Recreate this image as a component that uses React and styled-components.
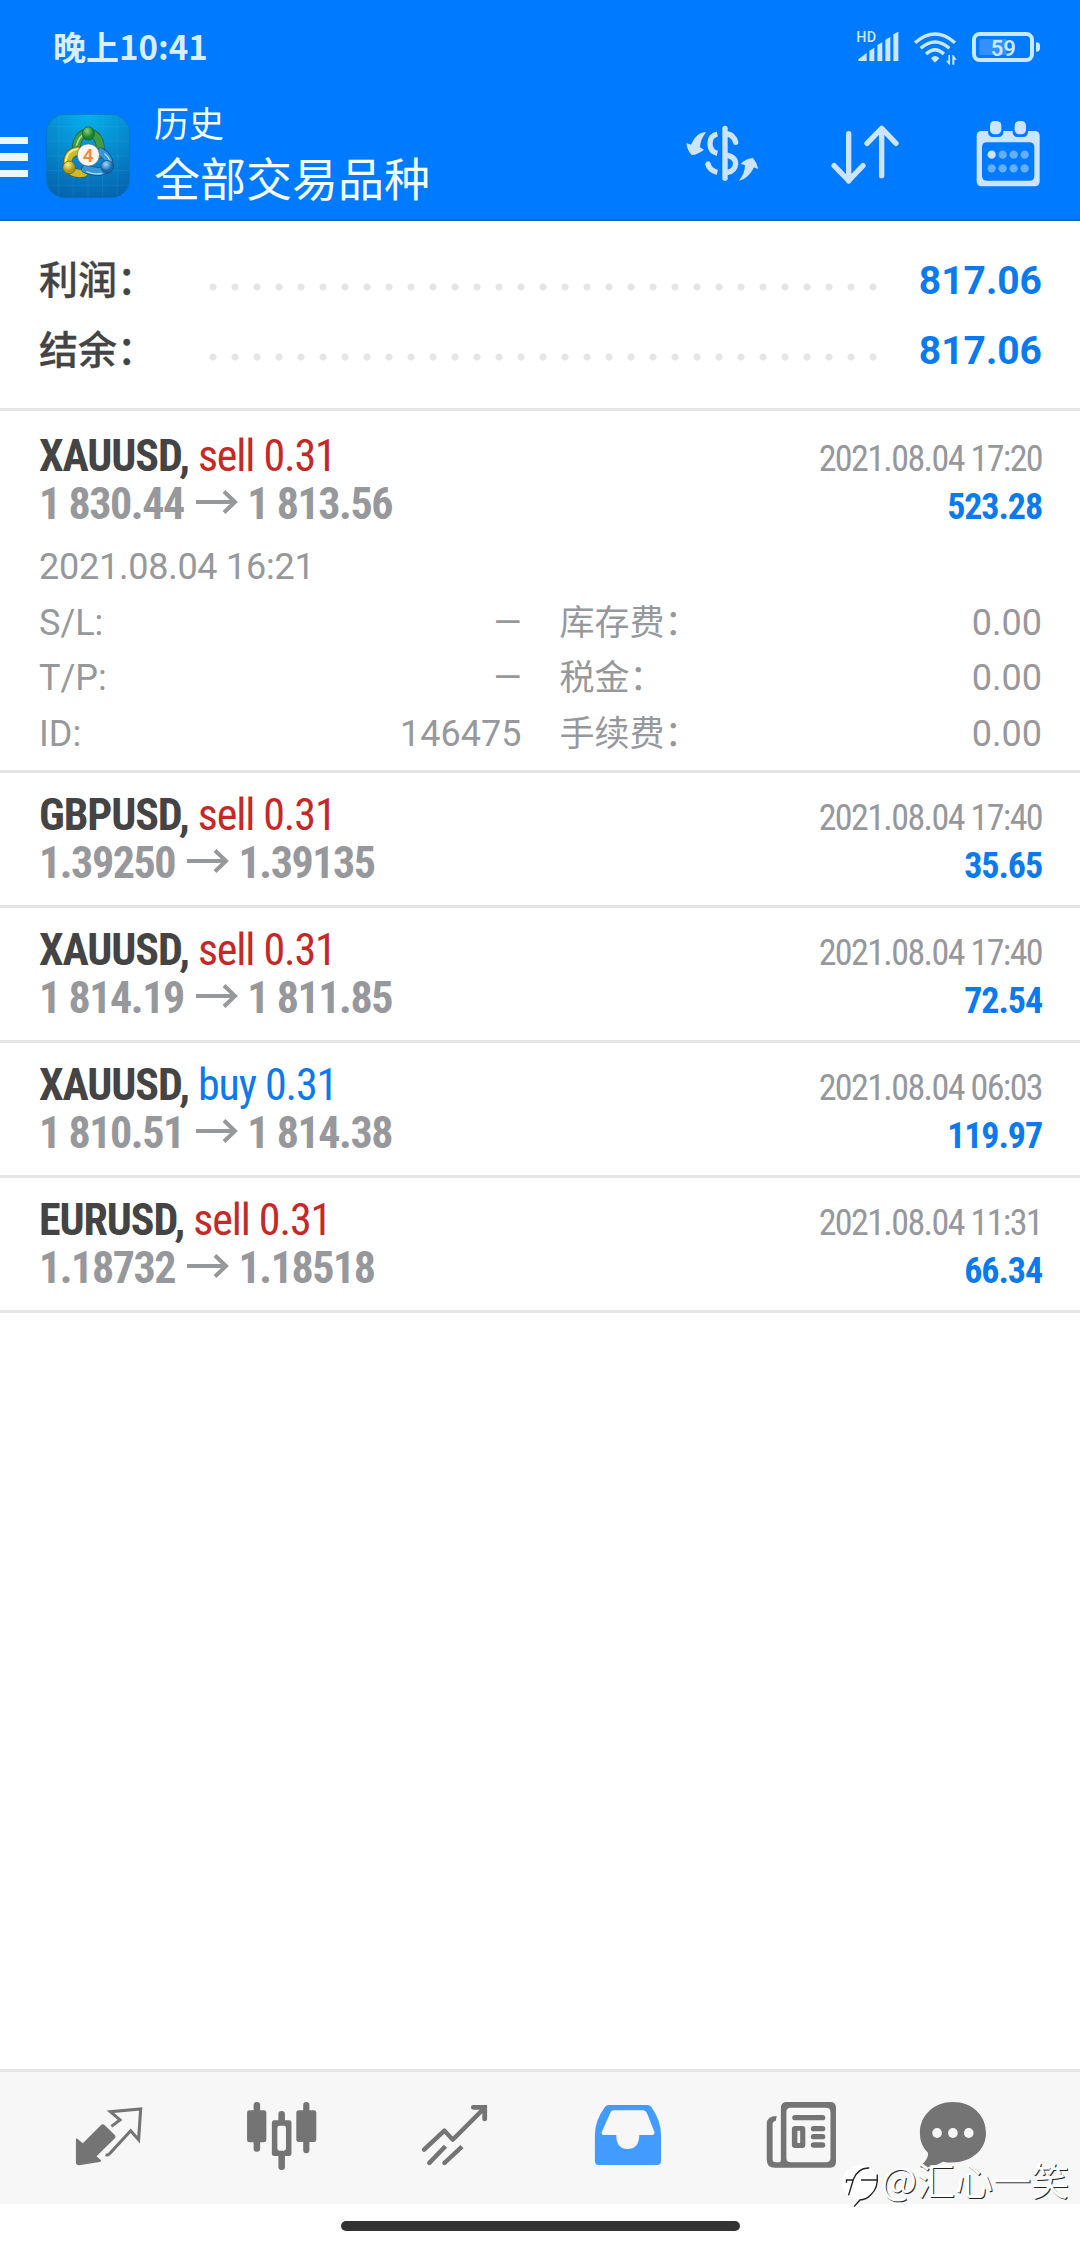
import React from 'react'
import styled, { createGlobalStyle } from 'styled-components'

const summary = [
    { label: '利润：', value: '817.06' },
    { label: '结余：', value: '817.06' },
]

const deals = [
    {
        id: 1, symbol: 'XAUUSD', side: 'sell', volume: '0.31', open: '1 830.44', close: '1 813.56',
        time: '2021.08.04 17:20', profit: '523.28', openTime: '2021.08.04 16:21',
        details: [
            ['S/L:', '—', '库存费：', '0.00'],
            ['T/P:', '—', '税金：', '0.00'],
            ['ID:', '146475', '手续费：', '0.00'],
        ],
    },
    { id: 2, symbol: 'GBPUSD', side: 'sell', volume: '0.31', open: '1.39250', close: '1.39135', time: '2021.08.04 17:40', profit: '35.65' },
    { id: 3, symbol: 'XAUUSD', side: 'sell', volume: '0.31', open: '1 814.19', close: '1 811.85', time: '2021.08.04 17:40', profit: '72.54' },
    { id: 4, symbol: 'XAUUSD', side: 'buy', volume: '0.31', open: '1 810.51', close: '1 814.38', time: '2021.08.04 06:03', profit: '119.97' },
    { id: 5, symbol: 'EURUSD', side: 'sell', volume: '0.31', open: '1.18732', close: '1.18518', time: '2021.08.04 11:31', profit: '66.34' },
]

function StatusIcons() {
    return (
        <StatusRight>
            <StatusSvg $w={43} viewBox="650 78 129 120">
                <text x="651" y="125" fontSize="43" fontWeight="500" letterSpacing="1">HD</text>
                <path d="M657 183V178L682 159V183ZM690 183V152L705 143V183ZM714 183V135L729 127V183ZM738 183V119L753 111V183ZM762 183V103L777 95V183Z" />
            </StatusSvg>
            <StatusSvg $w={45} viewBox="822 78 135 120">
                <g fill="none" stroke="#c9e8ff" strokeWidth="10">
                    <path d="M828 128Q888 76 948 128" />
                    <path d="M845 145Q888 107 931 145" />
                    <path d="M861 162Q888 137 915 162" />
                </g>
                <path d="M876 175Q888 161 901 175L891 185Q888 188 885 185Z" />
                <path d="M928 165h5v29h-3l-9-12h7zM940 194v-29h3l10 14h-7v15z" />
            </StatusSvg>
            <StatusSvg $w={70} viewBox="996 78 210 120">
                <path d="M1021 124q0-7 7-7h75v48h-75q-7 0-7-7z" fill="#3391ff" />
                <rect x="1005" y="102" width="174" height="78" rx="17" fill="none" stroke="#c9e8ff" strokeWidth="12" />
                <path d="M1191 127q12 0 12 9v10q0 9-12 9z" />
                <text x="1055" y="167" fontSize="66" fontWeight="600">59</text>
            </StatusSvg>
        </StatusRight>
    )
}

function Logo() {
    return (
        <LogoSvg viewBox="0 0 250 250">
            <defs>
                <radialGradient id="sky" cx=".5" cy="0" r="1.05">
                    <stop offset="0" stopColor="#06b0ec" />
                    <stop offset=".55" stopColor="#0786cb" />
                    <stop offset="1" stopColor="#0462ae" />
                </radialGradient>
                <radialGradient id="green" cx=".4" cy=".3"><stop offset="0" stopColor="#8fd36d" /><stop offset="1" stopColor="#17832e" /></radialGradient>
                <radialGradient id="yellow" cx=".4" cy=".3"><stop offset="0" stopColor="#fff08a" /><stop offset="1" stopColor="#a89718" /></radialGradient>
                <radialGradient id="blue" cx=".4" cy=".3"><stop offset="0" stopColor="#9fdcff" /><stop offset="1" stopColor="#1668b0" /></radialGradient>
            </defs>
            <rect x="1" y="1" width="248" height="248" rx="54" fill="url(#sky)" stroke="#0a6fc4" strokeWidth="2" />
            <path d="M38 3V247M81 2V248M125 2V248M168 2V248M212 3V247M2 38H248M1 81H249M1 125H249M1 168H249M2 212H248" stroke="#4cc4ee" strokeOpacity=".2" strokeWidth="2" />
            <g fill="none" strokeLinecap="round">
                <path d="M91 116C86 74 106 57 126 57S168 76 160 120" stroke="#165c33" strokeWidth="26" />
                <path d="M91 116C86 74 106 57 126 57S168 76 160 120" stroke="#3f9c45" strokeWidth="22" />
                <path d="M91 92Q98 66 116 60" stroke="#a9dc8c" strokeWidth="5" />
                <path d="M95 110Q64 114 64 148Q70 182 112 176" stroke="#5c5b14" strokeWidth="26" />
                <path d="M95 110Q64 114 64 148Q70 182 112 176" stroke="#cdbb2c" strokeWidth="22" />
                <path d="M93 104Q62 110 59 141" stroke="#fbf09a" strokeWidth="5" />
                <path d="M163 113Q188 126 188 154Q170 182 118 164" stroke="#0d477b" strokeWidth="26" />
                <path d="M163 113Q188 126 188 154Q170 182 118 164" stroke="#3595d6" strokeWidth="22" />
                <path d="M175 119Q190 131 192 148M122 172Q143 181 165 177" stroke="#a6dcfa" strokeWidth="4" />
            </g>
            <ellipse cx="126" cy="58" rx="18" ry="20" fill="url(#green)" stroke="#14562c" strokeWidth="2" />
            <circle cx="69" cy="159" r="19" fill="url(#yellow)" stroke="#5c5b14" strokeWidth="2" />
            <circle cx="182" cy="157" r="19" fill="url(#blue)" stroke="#0d477b" strokeWidth="2" />
            <circle cx="126" cy="122" r="33" fill="#f7f7f5" stroke="#56656a" strokeWidth="2" />
            <text x="125" y="142" fontSize="56" fontWeight="600" fill="#f08a3c" textAnchor="middle">4</text>
        </LogoSvg>
    )
}

function HeaderActions() {
    return (
        <Actions>
            <ActionSvg viewBox="137 348 216 222">
                <path d="M196 396Q166 398 152 434L138 429Q141 452 154 465Q172 464 191 449L179 442Q180 418 196 398ZM297 542Q325 536 341 502L354 508Q350 488 338 474Q319 475 301 491L314 496Q314 520 297 540Z" />
                <g fill="none" strokeWidth="16" strokeLinecap="round">
                    <path d="M254 385V535" />
                    <path d="M262 402Q280 405 286 427M262 466Q286 472 286 491Q284 513 262 517" />
                    <path d="M231 402Q209 407 209 431T231 460M203 491Q206 511 231 517" strokeLinecap="butt" />
                    <path d="M203 492L204 496" />
                </g>
            </ActionSvg>
            <ActionSvg viewBox="567 348 216 222">
                <g fill="none" strokeWidth="16" strokeLinecap="round" strokeLinejoin="round">
                    <path d="M626 401V543M582 497L626 542L669 497" />
                    <path d="M725 527V385M681 430L725 385L768 430" />
                </g>
            </ActionSvg>
            <ActionSvg viewBox="997 348 216 222">
                <path fillRule="evenodd" d="M1026 393H1045Q1044 410 1060 411H1076Q1092 410 1091 393H1119Q1118 410 1134 411H1150Q1166 410 1165 393H1185Q1200 393 1200 408V544Q1200 559 1185 559H1026Q1011 559 1011 544V408Q1011 393 1026 393ZM1042 427Q1027 427 1027 442V527Q1027 542 1042 542H1169Q1184 542 1184 527V442Q1184 427 1169 427Z" />
                <rect x="1051" y="363" width="34" height="40" rx="14" />
                <rect x="1125" y="363" width="34" height="40" rx="14" />
                <circle cx="1056" cy="464" r="12.500" />
                <g fill="#66afff">
                    <circle cx="1089" cy="464" r="12.500" /><circle cx="1122" cy="464" r="12.500" /><circle cx="1155" cy="464" r="12.500" />
                    <circle cx="1056" cy="505" r="12.500" /><circle cx="1089" cy="505" r="12.500" /><circle cx="1122" cy="505" r="12.500" /><circle cx="1155" cy="505" r="12.500" />
                </g>
            </ActionSvg>
        </Actions>
    )
}

function Arrow() {
    return (
        <ArrowSvg viewBox="0 0 42 24">
            <path d="M0 12H39M28 1.500L39 12L28 22.500" fill="none" stroke="#97989c" strokeWidth="4" />
        </ArrowSvg>
    )
}

function Deal({ deal }) {
    return (
        <DealRow $first={!!deal.details}>
            <Line>
                <Instrument>{deal.symbol}, <Side $side={deal.side}>{deal.side} {deal.volume}</Side></Instrument>
                <Time>{deal.time}</Time>
            </Line>
            <Line>
                <Prices>{deal.open}<Arrow />{deal.close}</Prices>
                <Profit>{deal.profit}</Profit>
            </Line>
            {deal.details ? (
                <Details>
                    <OpenTime>{deal.openTime}</OpenTime>
                    {deal.details.map(([a, b, c, d]) => (
                        <DetailPair key={a}>
                            <Detail><span>{a}</span><span>{b}</span></Detail>
                            <Detail><FeeLabel>{c}</FeeLabel><span>{d}</span></Detail>
                        </DetailPair>
                    ))}
                </Details>
            ) : null}
        </DealRow>
    )
}

function TabBar() {
    return (
        <Tabs>
            <Tab>
                <TabSvg viewBox="204.7 120 220.7 216" preserveAspectRatio="none">
                    <path d="M219 236Q220 234 224 237L239 250L292 195Q297 190 302 195L332 225Q336 230 332 235L279 289L292 301Q293 305 288 306L228 316Q219 316 219 307Z" />
                    <path d="M322 199L347 180L319 155L407 147L401 239L378 212L316 282Q312 286 305 285" fill="none" stroke="#747474" strokeWidth="9" />
                </TabSvg>
            </Tab>
            <Tab>
                <TabSvg viewBox="707.1 120 220.7 216" preserveAspectRatio="none">
                    <rect x="716" y="151" width="56" height="96" rx="7" />
                    <rect x="735" y="126" width="19" height="149" rx="9" />
                    <rect x="859" y="151" width="58" height="95" rx="7" />
                    <rect x="879" y="126" width="18" height="154" rx="9" />
                    <rect x="807" y="153" width="19" height="40" rx="9" />
                    <rect x="807" y="280" width="19" height="50" rx="9" />
                    <path fillRule="evenodd" d="M795 181H838Q845 181 845 188V281Q845 288 838 288H795Q788 288 788 281V188Q788 181 795 181ZM810 197Q804 197 804 204V265Q804 272 810 272H823Q829 272 829 265V204Q829 197 823 197Z" />
                </TabSvg>
            </Tab>
            <Tab>
                <TabSvg viewBox="1209.4 120 220.7 216" preserveAspectRatio="none">
                    <g fill="none" stroke="#747474" strokeWidth="13">
                        <path d="M1230 269L1289 212L1313 239L1406 143" strokeLinejoin="round" strokeLinecap="round" />
                        <path d="M1373 142H1406V177" strokeWidth="14" strokeLinecap="round" />
                        <path d="M1245 309L1292 259M1289 309L1340 260" />
                        <path d="M1245 309L1246 308M1289 309L1290 308" strokeLinecap="round" />
                    </g>
                </TabSvg>
            </Tab>
            <Tab>
                <TabSvg viewBox="143.8 120 220.7 216" preserveAspectRatio="none" $active>
                    <path fillRule="evenodd" d="M199 135H309Q318 135 322 141Q350 182 350 225V304Q350 315 338 315H169Q158 315 158 304V225Q158 182 187 141Q191 135 199 135ZM212 151Q206 151 203 158L178 216Q176 225 184 225H220Q220 267 253 267T287 225H323Q332 225 331 216L309 159Q305 151 298 151Z" />
                </TabSvg>
            </Tab>
            <Tab>
                <TabSvg viewBox="646.1 120 220.7 216" preserveAspectRatio="none">
                    <path fillRule="evenodd" d="M715 126H841Q858 126 858 143V306Q858 323 841 323H680Q657 323 657 299V192Q657 168 686 168L683 183Q674 184 674 193V297Q674 307 683 307H691Q698 307 698 299V143Q698 126 715 126ZM727 143Q714 143 714 156V294Q714 307 727 307H829Q842 307 842 294V156Q842 143 829 143Z" />
                    <rect x="731" y="165" width="96" height="16" rx="8" />
                    <path fillRule="evenodd" d="M740 198H760Q769 198 769 207V255Q769 264 760 264H740Q730 264 730 255V207Q730 198 740 198ZM746 212V249H754V212Z" />
                    <rect x="785" y="198" width="42" height="16" rx="8" />
                    <rect x="785" y="222" width="42" height="16" rx="8" />
                    <rect x="785" y="247" width="42" height="16" rx="8" />
                </TabSvg>
            </Tab>
            <Tab $last>
                <TabSvg viewBox="1088.9 120 220.7 216" preserveAspectRatio="none">
                    <path d="M1199 126C1254 126 1295 165 1295 219C1295 279 1237 318 1170 305Q1143 322 1107 323Q1102 321 1107 316Q1128 297 1127 279Q1103 256 1103 219C1103 165 1145 126 1199 126Z" />
                    <g fill="#f7f7f7">
                        <ellipse cx="1153" cy="219" rx="14" ry="15" />
                        <ellipse cx="1199" cy="219" rx="14" ry="15" />
                        <ellipse cx="1245" cy="219" rx="14" ry="15" />
                    </g>
                </TabSvg>
            </Tab>
        </Tabs>
    )
}

function App() {
    return (
        <Screen>
            <GlobalStyle />
            <Header>
                <StatusBar>
                    <Clock>晚上10:41</Clock>
                    <StatusIcons />
                </StatusBar>
                <Toolbar>
                    <Menu><MenuBar /><MenuBar /><MenuBar /></Menu>
                    <Logo />
                    <Titles>
                        <Subtitle>历史</Subtitle>
                        <Title>全部交易品种</Title>
                    </Titles>
                    <HeaderActions />
                </Toolbar>
            </Header>
            <Summary>
                {summary.map(row => (
                    <SummaryRow key={row.label}>
                        <SummaryLabel>{row.label}</SummaryLabel>
                        <Dots />
                        <SummaryValue>{row.value}</SummaryValue>
                    </SummaryRow>
                ))}
            </Summary>
            <List>
                {deals.map(deal => <Deal key={deal.id} deal={deal} />)}
            </List>
            <TabBar />
            <GestureArea><GestureBar /></GestureArea>
            <Watermark>
                <WatermarkSvg viewBox="878 326 110 132" preserveAspectRatio="none">
                    <ellipse cx="930" cy="381" rx="52" ry="51" fill="#fff" />
                    <path d="M957 338Q925 336 911 372L897 420M891 382V374H911M933 374H980M980 358Q984 398 961 419Q948 433 930 434L913 454" fill="none" stroke="#222" strokeWidth="4" />
                </WatermarkSvg>
                @汇心一笑
            </Watermark>
        </Screen>
    )
}
export default App

const GlobalStyle = createGlobalStyle`
    body {
        margin: 0;
        background: #fff;
        font-family: Roboto, 'Noto Sans CJK SC', sans-serif;
    }
    svg { display: block; flex: none; }
`
const Screen = styled.div`
    position: relative;
    display: flex;
    flex-direction: column;
    width: 1080px;
    height: 2248px;
    overflow: hidden;
    background: #fff;
`
const Header = styled.header`
    box-sizing: border-box;
    height: 221px;
    background: #007aff;
    border-bottom: 2px solid #1766b8;
`
const StatusBar = styled.div`
    display: flex;
    justify-content: space-between;
    height: 96px;
    padding: 0 38px 0 53px;
`
const Clock = styled.div`
    font: 700 33px/93px 'Noto Sans CJK SC', sans-serif;
    color: #d8eeff;
`
const StatusRight = styled.div`
    display: flex;
    gap: 13.500px;
    padding-top: 26px;
    margin-right: 1px;
`
const StatusSvg = styled.svg`
    width: ${p => p.$w}px;
    height: 40px;
    fill: #c9e8ff;
`
const Toolbar = styled.div`
    display: flex;
    height: 123px;
`
const Menu = styled.div`
    display: flex;
    flex-direction: column;
    gap: 9px;
    width: 46px;
    padding-top: 40.500px;
`
const MenuBar = styled.div`
    width: 28px;
    height: 7.500px;
    background: #e8f8ff;
`
const LogoSvg = styled.svg`
    width: 84px;
    height: 84px;
    margin-top: 18px;
`
const Titles = styled.div`
    flex: 1;
    padding-left: 24px;
    color: #f2fcff;
    white-space: nowrap;
`
const Subtitle = styled.div`
    font-size: 35px;
    line-height: 50px;
    padding-top: 5px;
`
const Title = styled.div`
    font-size: 46px;
    line-height: 58px;
`
const Actions = styled.div`
    display: flex;
    width: 430px;
    justify-content: space-around;
    padding-top: 20px;
`
const ActionSvg = styled.svg`
    width: 72px;
    height: 74px;
    overflow: visible;
    fill: #cce4ff;
    & g[fill='none'] { stroke: #cce4ff; }
`
const Summary = styled.section`
    padding: 25px 38px 22px 39px;
    border-bottom: 3px solid #e5e5e5;
`
const SummaryRow = styled.div`
    display: flex;
    height: 70px;
    font-size: 39px;
    line-height: 70px;
`
const SummaryLabel = styled.div`
    width: 163px;
    font-weight: 500;
    color: #444;
    -webkit-text-stroke: .3px #444;
`
const Dots = styled.div`
    width: 682px;
    height: 22px;
    margin-top: 30px;
    background: radial-gradient(circle, #e5e5e5 3.200px, transparent 3.900px) 0 0 / 22px 22px;
`
const SummaryValue = styled.div`
    margin-left: auto;
    font-weight: 700;
    color: #0a7aee;
`
const List = styled.main`
    flex: 1;
`
const DealRow = styled.article`
    padding: ${p => p.$first ? '21px 38px 8px 39px' : '17.500px 38px 18.500px 39px'};
    border-bottom: 3px solid #e5e5e5;
`
const Line = styled.div`
    display: flex;
    justify-content: space-between;
    align-items: baseline;
    height: 48px;
    line-height: 48px;
    font-family: 'Roboto Condensed', Roboto, sans-serif;
    font-stretch: 75%;
    white-space: nowrap;
`
const Instrument = styled.div`
    font-size: 44px;
    font-weight: 700;
    letter-spacing: -1.100px;
    color: #444;
`
const Side = styled.span`
    font-weight: 400;
    color: ${p => p.$side === 'sell' ? '#c62828' : '#0a7aee'};
`
const Time = styled.div`
    font-size: 36px;
    letter-spacing: -1.600px;
    color: #97989c;
`
const Prices = styled.div`
    display: flex;
    font-size: 44px;
    font-weight: 700;
    letter-spacing: -1.450px;
    color: #97989c;
`
const ArrowSvg = styled.svg`
    width: 42px;
    height: 24px;
    margin: 10px 9.500px 0 12px;
`
const Profit = styled.div`
    font-size: 36px;
    font-weight: 700;
    letter-spacing: -1.100px;
    color: #0a7aee;
`
const Details = styled.div`
    padding-top: 12px;
    font-size: 36px;
    line-height: 55.500px;
    color: #97989c;
`
const OpenTime = styled.div`
    height: 55.500px;
    letter-spacing: -.250px;
`
const DetailPair = styled.div`
    display: grid;
    grid-template-columns: 1fr 1fr;
    column-gap: 38px;
`
const Detail = styled.div`
    display: flex;
    justify-content: space-between;
    height: 55.500px;
`
const FeeLabel = styled.span`
    font-size: 35px;
`
const Tabs = styled.nav`
    display: flex;
    box-sizing: border-box;
    height: 135px;
    padding-left: 22px;
    border-top: 3px solid #e5e5e5;
    background: #f7f7f7;
`
const Tab = styled.div`
    display: flex;
    justify-content: center;
    width: ${p => p.$last ? 132 : 173}px;
    padding-top: 28px;
`
const TabSvg = styled.svg`
    width: 76px;
    height: 72px;
    fill: ${p => p.$active ? '#429bff' : '#747474'};
`
const GestureArea = styled.div`
    display: flex;
    justify-content: center;
    height: 44px;
`
const GestureBar = styled.div`
    width: 399px;
    height: 10px;
    margin-top: 17px;
    border-radius: 5px;
    background: #333;
`
const Watermark = styled.div`
    position: absolute;
    right: 11px;
    bottom: 40px;
    display: flex;
    gap: 1px;
    font-family: 'Noto Sans CJK SC', sans-serif;
    font-size: 38px;
    line-height: 50px;
    color: #fff;
    text-shadow: 1px 1px 0 #222;
`
const WatermarkSvg = styled.svg`
    width: 38px;
    height: 44px;
    margin-top: 10px;
`
